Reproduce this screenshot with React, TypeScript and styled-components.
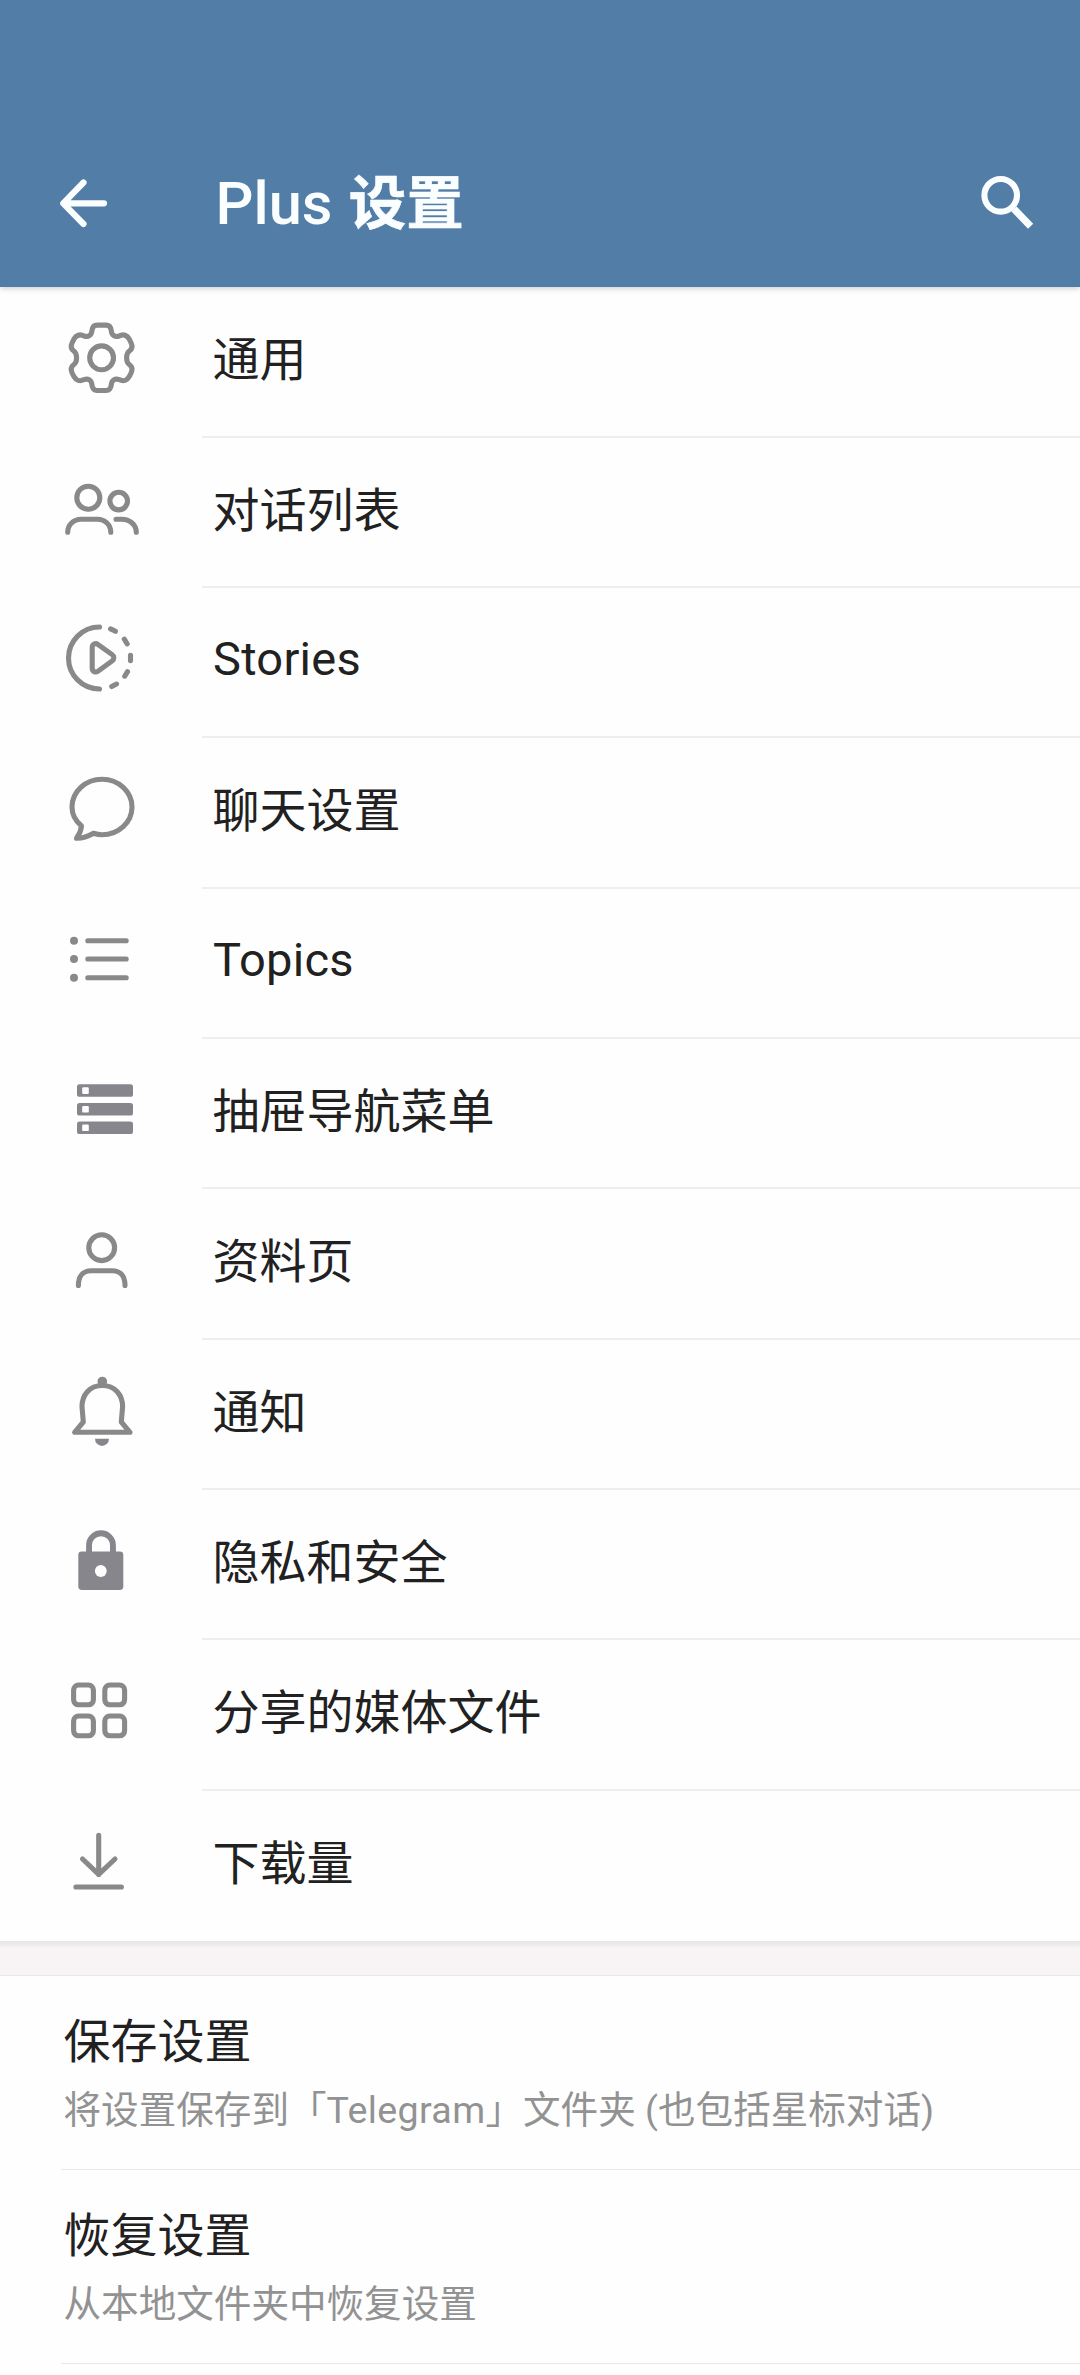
import React from "react";
import styled, { createGlobalStyle } from "styled-components";

const GlobalStyle = createGlobalStyle`
  * { box-sizing: border-box; }
  body {
    margin: 0;
    background: #fefefe;
    font-family: Roboto, "Noto Sans CJK SC", sans-serif;
    color: #212121;
  }
`;

const Screen = styled.div`
  width: 1080px;
  height: 2375px;
  overflow: hidden;
  display: flex;
  flex-direction: column;
`;

const Header = styled.header`
  flex: none;
  height: 287px;
  padding: 119px 43px 0 54px;
  display: flex;
  align-items: flex-start;
  background: #527da6;
  box-shadow: 0 1px 6px rgba(0, 0, 0, 0.22);
`;

const HeaderButton = styled.button`
  flex: none;
  width: 60px;
  height: 168px;
  padding: 0;
  border: 0;
  background: none;
  display: flex;
  align-items: center;
`;

const Title = styled.h1`
  flex: 1;
  margin: 0;
  padding-left: 101.5px;
  font-size: 59.5px;
  font-weight: 500;
  line-height: 171px;
  white-space: nowrap;
  color: #fafeff;
`;

const TitleHan = styled.span`
  margin-left: 1.5px;
  font-size: 57.5px;
  font-weight: 700;
  -webkit-text-stroke: 0.6px #fafeff;
`;

const Menu = styled.nav`
  flex: none;
  padding-top: 0.4px;
  display: flex;
  flex-direction: column;
`;

const MenuRow = styled.div`
  height: 150.35px;
  padding-left: 60px;
  display: flex;
`;

const IconSlot = styled.div`
  width: 142px;
  padding-top: 31px;
`;

const MenuIcon = styled.svg`
  display: block;
  width: 84px;
  height: 84px;
  fill: none;
  stroke: #89898a;
  stroke-width: 5.1;
  stroke-linecap: round;
  stroke-linejoin: round;
`;

const MenuLabel = styled.div<{ $last?: boolean; $latin?: boolean }>`
  flex: 1;
  padding: ${(p) => (p.$latin ? "0 0 0 11px" : "1px 0 0 10.5px")};
  border-bottom: ${(p) => (p.$last ? "0" : "2px solid #eeeeee")};
  font-size: 47px;
  letter-spacing: ${(p) => (p.$latin ? "0.25px" : "0")};
  line-height: ${(p) => (p.$latin ? "142px" : "144px")};
  white-space: nowrap;
`;

const Separator = styled.div`
  flex: none;
  height: 35px;
  background: linear-gradient(#e6e6e7, #ededee 4px, #f8f4f5 7px);
  border-bottom: 1px solid #ebe8e9;
`;

const Actions = styled.section`
  flex: none;
  padding-left: 61px;
`;

const Action = styled.div`
  height: 193.8px;
  padding: 31px 0 0 2.5px;
  border-bottom: 1px solid #e9e9e9;
`;

const ActionTitle = styled.div`
  font-size: 47px;
  line-height: 70px;
`;

const ActionNote = styled.div`
  font-size: 37.6px;
  line-height: 67px;
  white-space: nowrap;
  color: #929292;
`;

const AppName = styled.span`
  letter-spacing: 0.35px;
`;

const Solid = styled.g`
  fill: #87868c;
  stroke: none;
`;

const Dot = styled.circle`
  fill: #89898a;
  stroke: none;
`;

const Cutout = styled.g`
  fill: #fefefe;
`;

const GearIcon = () => (
  <g transform="translate(41.6 39.8)">
    <path d="M-4.5-32.7H4.5C8-32.7 9.3-30.5 9.7-27C10-22.5 13.5-20.3 17.5-21.8C22-24.3 25.5-22.5 27.5-19L29.3-15.5C31-12 30.7-9 28-7C24-4.5 24 4.5 28 7C30.7 9 31 12 29.3 15.5L27.5 19C25.5 22.5 22 24.3 17.5 21.8C13.5 20.3 10 22.5 9.7 27C9.3 30.5 8 32.7 4.5 32.7H-4.5C-8 32.7-9.3 30.5-9.7 27C-10 22.5-13.5 20.3-17.5 21.8C-22 24.3-25.5 22.5-27.5 19L-29.3 15.5C-31 12-30.7 9-28 7C-24 4.5-24-4.5-28-7C-30.7-9-31-12-29.3-15.5L-27.5-19C-25.5-22.5-22-24.3-17.5-21.8C-13.5-20.3-10-22.5-9.7-27C-9.3-30.5-8-32.7-4.5-32.7Z" />
    <circle r="11.9" />
  </g>
);

const GroupIcon = () => (
  <>
    <circle cx="28.3" cy="28.7" r="11.5" />
    <circle cx="58.7" cy="32.1" r="8.8" />
    <path d="M7.7 63.3C7.7 56 13.5 50.2 21 50.2H37.5C45 50.2 50.8 56 50.8 63.3" />
    <path d="M56 50.2H61.5C70 50.2 76.3 56 76.3 63.3" />
  </>
);

const StoriesIcon = () => (
  <>
    <path d="M39.5 8A31 31 0 0 0 39.5 70" />
    {[-64, -32, 0, 31, 62].map((angle) => (
      <path key={angle} d="M70.5 36.2v5.4" transform={`rotate(${angle} 39.5 39)`} />
    ))}
    <path d="M32.2 28.5C32.2 25 35.5 23.6 38 25.5L52 35.5C54.5 37.3 54.5 40.2 52 42L38 52.2C35.5 54 32.2 52.6 32.2 49Z" />
  </>
);

const ChatIcon = () => (
  <path d="M42 10.3C58.6 10.3 72 22.7 72 38S58.6 65.7 42 65.7C39 65.7 36.5 65.2 33.5 64.3C28 67.5 22 69.5 16.5 69.3C19 66 21 62 21.5 57C15.5 52 12 45.5 12 38C12 22.7 25.4 10.3 42 10.3Z" />
);

const TopicsIcon = () => (
  <>
    {[20.7, 39, 57.7].map((y) => (
      <g key={y}>
        <Dot cx="14" cy={y} r="4" />
        <path d={`M27.8 ${y}H66.2`} />
      </g>
    ))}
  </>
);

const DrawerIcon = () => (
  <Solid>
    {[14.3, 33, 51.5].map((y) => (
      <g key={y}>
        <rect x="17" y={y} width="56" height="12.5" rx="2.6" />
        <Cutout>
          <rect x="22.2" y={y + 3} width="6.6" height="6.6" rx="1.2" />
        </Cutout>
      </g>
    ))}
  </Solid>
);

const PersonIcon = () => (
  <>
    <circle cx="41.7" cy="27.7" r="12.9" />
    <path d="M18.4 65.5C18.4 56.5 23 50.7 31 50.7H52.5C60.5 50.7 65 56.5 65 65.5" />
  </>
);

const BellIcon = () => (
  <>
    <path d="M42.3 14.5C29.5 14.5 22 24 22 35.5L23.3 51L14.6 61.3H70L61.3 51L62.6 35.5C62.6 24 55.1 14.5 42.3 14.5Z" />
    <Dot cx="42.3" cy="10.5" r="4.8" />
    <Solid>
      <path d="M35 67.7H49A7 7.3 0 0 1 35 67.7Z" />
    </Solid>
  </>
);

const LockIcon = () => (
  <Solid>
    <path d="M26.1 32V24.2A14.9 14.9 0 0 1 55.9 24.2V32H50V24.2A9 9 0 0 0 32 24.2V32Z" />
    <rect x="18.3" y="30.5" width="45" height="38.5" rx="3.4" />
    <Cutout>
      <circle cx="40.8" cy="50" r="5.9" />
    </Cutout>
  </Solid>
);

const GridIcon = () => (
  <>
    {[13.6, 44.8].map((x) =>
      [14, 45].map((y) => <rect key={`${x}-${y}`} x={x} y={y} width="19.8" height="19.8" rx="5" />)
    )}
  </>
);

const DownloadIcon = () => (
  <path d="M38.7 13.4V52.4M22.5 37L38.7 52.4L55 37M15.9 65H61.4" />
);

const items: { label: string; Icon: React.FC; latin?: boolean }[] = [
  { label: "通用", Icon: GearIcon },
  { label: "对话列表", Icon: GroupIcon },
  { label: "Stories", Icon: StoriesIcon, latin: true },
  { label: "聊天设置", Icon: ChatIcon },
  { label: "Topics", Icon: TopicsIcon, latin: true },
  { label: "抽屉导航菜单", Icon: DrawerIcon },
  { label: "资料页", Icon: PersonIcon },
  { label: "通知", Icon: BellIcon },
  { label: "隐私和安全", Icon: LockIcon },
  { label: "分享的媒体文件", Icon: GridIcon },
  { label: "下载量", Icon: DownloadIcon },
];

const actions: { title: string; note: React.ReactNode }[] = [
  {
    title: "保存设置",
    note: (
      <>
        将设置保存到「<AppName>Telegram</AppName>」文件夹 (也包括星标对话)
      </>
    ),
  },
  { title: "恢复设置", note: "从本地文件夹中恢复设置" },
];

export default function App() {
  return (
    <Screen>
      <GlobalStyle />
      <Header>
        <HeaderButton aria-label="返回">
          <svg width="60" height="60" viewBox="0 0 60 60" fill="none" stroke="#fafeff" strokeWidth="6.2" strokeLinecap="round" strokeLinejoin="round">
            <path d="M50 30.3H9.5M29.5 9.5L9.2 30.3L29.5 51" />
          </svg>
        </HeaderButton>
        <Title>
          Plus <TitleHan>设置</TitleHan>
        </Title>
        <HeaderButton aria-label="搜索">
          <svg width="60" height="60" viewBox="0 0 60 60" fill="none" stroke="#fafeff">
            <circle cx="23.7" cy="22.3" r="16.3" strokeWidth="6.1" />
            <path d="M37 36L53.6 53.2" strokeWidth="7.2" />
          </svg>
        </HeaderButton>
      </Header>
      <Menu>
        {items.map(({ label, Icon, latin }, i) => (
          <MenuRow key={label}>
            <IconSlot>
              <MenuIcon viewBox="0 0 84 84">
                <Icon />
              </MenuIcon>
            </IconSlot>
            <MenuLabel $latin={latin} $last={i === items.length - 1}>
              {label}
            </MenuLabel>
          </MenuRow>
        ))}
      </Menu>
      <Separator />
      <Actions>
        {actions.map(({ title, note }) => (
          <Action key={title}>
            <ActionTitle>{title}</ActionTitle>
            <ActionNote>{note}</ActionNote>
          </Action>
        ))}
      </Actions>
    </Screen>
  );
}
